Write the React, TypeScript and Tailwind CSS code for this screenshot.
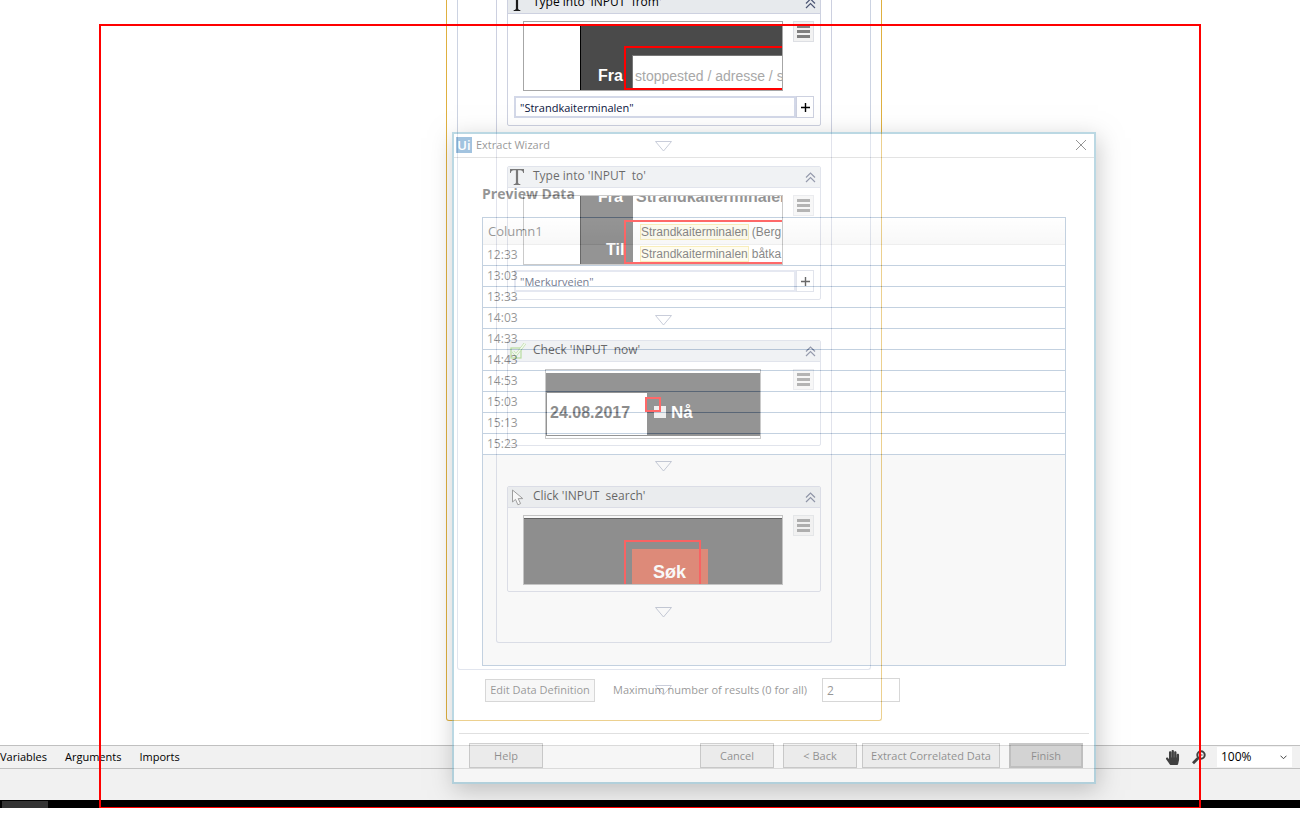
import type { ReactNode } from "react";
import { FaHandPaper } from "react-icons/fa";

const times = ["12:33", "13:03", "13:33", "14:03", "14:33", "14:43", "14:53", "15:03", "15:13", "15:23"];

function Connector() {
  return (
    <div className="flex h-10 items-center justify-center pr-px">
      <svg width="17" height="11" viewBox="0 0 17 11" fill="white" stroke="#a3abc0">
        <path d="M.5 .5H16.5L8.5 10Z" />
      </svg>
    </div>
  );
}

function TypeIcon() {
  return (
    <svg width="14" height="16" viewBox="0 0 14 16" fill="#1a1a1a">
      <path d="M0 0H14V4H13.2C12.9 2 12 1.2 10.3 1.2H8.1V13.2C8.1 14.5 8.6 14.9 10.3 15V16H3.7V15C5.4 14.9 5.9 14.5 5.9 13.2V1.2H3.7C2 1.2 1.1 2 .8 4H0Z" />
    </svg>
  );
}

function CheckIcon() {
  return (
    <svg width="16" height="16" viewBox="0 0 16 16" fill="none" stroke="#86c45c">
      <rect x="1" y="5" width="10" height="10" strokeWidth="1.2" />
      <path d="M3 8.5L6 12L15 .5" strokeWidth="2.6" />
      <path d="M3 8.5L6 12L15 .5" stroke="#eff8e8" strokeWidth="1.4" />
    </svg>
  );
}

function CursorIcon() {
  return (
    <svg width="14" height="17" viewBox="0 0 14 17" fill="white" stroke="#666">
      <path d="M2.5 1V13L5.5 10.4L7.9 15.8L10.6 14.6L8.2 9.6H12.8Z" />
    </svg>
  );
}

function Activity({ title, icon, thumb, value }: { title: string; icon: ReactNode; thumb: ReactNode; value?: string }) {
  return (
    <section className="rounded-[2px] border border-[#cdd1e0] bg-white">
      <header className="flex h-[21px] items-center border-b border-[#cdd1e0] bg-[#e7eaed]">
        <span className="flex w-[25px] justify-start pl-[2px]">{icon}</span>
        <h3 className="flex-1 pb-[2px] text-[12px] leading-4 whitespace-pre">{title}</h3>
        <button aria-label="Collapse" className="mr-1">
          <svg width="11" height="11" viewBox="0 0 11 11" fill="none" stroke="#4c5674" strokeWidth="1.2">
            <path d="M1 5.5L5.5 1L10 5.5M1 10L5.5 5.5L10 10" />
          </svg>
        </button>
      </header>
      <div className="flex items-start pt-[7px] pr-[6px] pl-[15px]">
        <div className="flex w-[260px] justify-center">{thumb}</div>
        <button aria-label="Options" className="ml-auto flex h-[21px] w-[21px] flex-col items-center justify-center gap-[2px] border border-[#dddfe4] bg-[#f2f2f2]">
          <span className="h-[3px] w-[13px] bg-[#808080]" />
          <span className="h-[3px] w-[13px] bg-[#808080]" />
          <span className="h-[3px] w-[13px] bg-[#808080]" />
        </button>
      </div>
      {value ? (
        <div className="flex h-[34px] px-[6px] pt-[5px] pb-[7px]">
          <input aria-label={title} defaultValue={value} className="min-w-0 flex-1 border-2 border-[#d3d8e8] px-1 pt-px text-[11px] leading-4 text-[#0b1540]" />
          <button aria-label="Expand editor" className="flex w-[18px] items-center justify-center border border-[#cdd1e0]">
            <svg width="9" height="9" viewBox="0 0 9 9" stroke="black" strokeWidth="1.4">
              <path d="M4.5 0V9M0 4.5H9" />
            </svg>
          </button>
        </div>
      ) : (
        <div className="h-[6px]" />
      )}
    </section>
  );
}

const arial = "font-['Liberation_Sans',Arial,sans-serif]";

function FromThumb() {
  return (
    <div className={`relative h-[70px] w-full overflow-hidden border border-[#a6a6a6] bg-white ${arial}`}>
      <div className="absolute top-[3px] right-0 bottom-0 left-[56px] border-l border-black bg-[#4a4a4a]" />
      <div className="absolute top-[33px] right-0 bottom-0 left-[108px] border-t border-l border-[#777] bg-white" />
      <b className="absolute top-[45px] left-[74px] text-[16px] leading-[18px] text-white">Fra</b>
      <span className="absolute top-[46px] left-[111px] whitespace-nowrap text-[14px] leading-4 text-[#a8a8a8]">stoppested / adresse / s</span>
      <div className="absolute top-[24px] right-0 bottom-0 left-[100px] border-2 border-r-0 border-[#ff0000]" />
    </div>
  );
}

function Suggestion({ rest }: { rest: string }) {
  return (
    <div className="flex h-[22px] items-center gap-[3px] whitespace-nowrap text-[12px] text-[#333]">
      <span className="flex h-4 items-center border border-[#f5e38c] bg-[#fefae6]">Strandkaiterminalen</span>
      {rest}
    </div>
  );
}

function ToThumb() {
  return (
    <div className={`relative h-[70px] w-full overflow-hidden border border-[#a6a6a6] bg-white ${arial}`}>
      <div className="absolute top-0 bottom-0 left-[56px] w-[53px] border-l border-black bg-[#4a4a4a]" />
      <b className="absolute top-[-8px] left-[74px] text-[16px] leading-[18px] text-white">Fra</b>
      <b className="absolute top-[-8px] left-[112px] text-[16px] leading-[18px] text-[#4a4a4a]">Strandkaiterminalen</b>
      <b className="absolute top-[45px] left-[82px] text-[16px] leading-[18px] text-white">Til</b>
      <div className="absolute top-[25px] right-0 left-[116px]">
        <Suggestion rest="(Berg" />
        <Suggestion rest="båtka" />
      </div>
      <div className="absolute top-[24px] right-0 bottom-0 left-[100px] border-2 border-r-0 border-[#ff0000]" />
    </div>
  );
}

function NowThumb() {
  return (
    <div className={`relative h-[70px] w-[216px] overflow-hidden border border-[#a6a6a6] bg-white ${arial}`}>
      <div className="absolute inset-x-0 top-[3px] bottom-[2px] bg-[#4a4a4a]" />
      <div className="absolute top-[23px] left-[1px] h-[42px] w-[100px] bg-white" />
      <b className="absolute top-[34px] left-[4px] text-[16px] leading-[18px] text-[#3c3c3c]">24.08.2017</b>
      <div className="absolute top-[36px] left-[108px] h-[12px] w-[12px] bg-[#e4e4e4]" />
      <b className="absolute top-[34px] left-[125px] text-[17px] leading-[18px] text-white">Nå</b>
      <div className="absolute top-[27px] left-[99px] h-[15px] w-[16px] border-2 border-[#ff0000]" />
    </div>
  );
}

function SearchThumb() {
  return (
    <div className={`relative h-[70px] w-full overflow-hidden border border-[#a6a6a6] bg-white ${arial}`}>
      <div className="absolute inset-x-0 top-[2px] bottom-0 border-t border-black bg-[#4a4a4a]" />
      <div className="absolute top-[33px] left-[108px] h-[40px] w-[76px] bg-[#d04325]" />
      <b className="absolute top-[46px] left-[129px] text-[18px] leading-5 text-white">Søk</b>
      <div className="absolute top-[24px] left-[100px] h-[60px] w-[77px] border-2 border-[#ff0000]" />
    </div>
  );
}

function Designer() {
  return (
    <main className="flex h-[745px] justify-center overflow-hidden bg-white pl-7">
      <div className="w-[436px] self-start rounded-b-[3px] border border-t-0 border-[#dfb040] px-[10px] pb-[10px]">
        <div className="rounded-b-[3px] border border-t-0 border-[#ccd3e2] px-[38px] pb-[26px]">
          <div className="flex flex-col rounded-b-[3px] border border-t-0 border-[#ccd0e0] px-[10px] pb-[10px]">
            <div className="-mt-2 flex flex-col">
              <Activity title="Type into 'INPUT  from'" icon={<TypeIcon />} thumb={<FromThumb />} value={'"Strandkaiterminalen"'} />
              <Connector />
              <Activity title="Type into 'INPUT  to'" icon={<TypeIcon />} thumb={<ToThumb />} value={'"Merkurveien"'} />
              <Connector />
              <Activity title="Check 'INPUT  now'" icon={<CheckIcon />} thumb={<NowThumb />} />
              <Connector />
              <Activity title="Click 'INPUT  search'" icon={<CursorIcon />} thumb={<SearchThumb />} />
              <Connector />
            </div>
          </div>
        </div>
        <Connector />
      </div>
    </main>
  );
}

const dialogButton = "h-[25px] border border-[#8f8f8f] bg-[#e4e4e4] pt-px text-[11px]";

function ExtractWizard() {
  return (
    <div role="dialog" aria-label="Extract Wizard" className="absolute top-[132px] left-[452px] flex w-[644px] flex-col border-2 border-[#5ba3bd] bg-white text-black opacity-[.41] shadow-[2px_6px_22px_rgba(0,0,0,0.5)]">
      <header className="flex h-6 items-center border-b border-[#bdbdbd] pr-[7px] pb-px pl-[2px]">
        <span className="flex h-4 w-4 items-center justify-center bg-[#1f70b4] text-[13px] leading-4 font-semibold text-white">Ui</span>
        <h1 className="ml-1 flex-1 text-[11px] leading-4">Extract Wizard</h1>
        <button aria-label="Close">
          <svg width="12" height="12" viewBox="0 0 12 12" stroke="black">
            <path d="M1 1L11 11M11 1L1 11" />
          </svg>
        </button>
      </header>
      <div className="px-7 pt-[26px]">
        <h2 className="h-[33px] text-[14px] leading-5 font-bold">Preview Data</h2>
        <div className="h-[449px] border border-[#6f90b6] bg-[#f0f0f0]">
          <table className="w-full border-collapse">
            <thead>
              <tr className="h-[26px] bg-linear-to-b from-white to-[#eeeeee]">
                <th className="border-b border-[#d8d8d8] py-0 pl-[5px] text-left text-[13px] leading-5 font-normal">Column1</th>
              </tr>
            </thead>
            <tbody>
              {times.map((time) => (
                <tr key={time} className="h-[21px] bg-white">
                  <td className="border-b border-[#6f90b6] py-0 pl-1 text-[12px] leading-5">{time}</td>
                </tr>
              ))}
            </tbody>
          </table>
        </div>
        <div className="mt-3 flex h-6 items-center pl-[3px] text-[11px]">
          <button className="h-[23px] w-[110px] border border-[#a0a0a0] bg-[#eeeeee]">Edit Data Definition</button>
          <label htmlFor="max-results" className="ml-[18px] w-[209px]">Maximum number of results (0 for all)</label>
          <input id="max-results" defaultValue="2" className="h-6 w-[78px] border border-[#a0a0a0] px-1 text-[12px]" />
        </div>
      </div>
      <footer className="mx-[5px] mt-[31px] flex h-[49px] items-start border-t border-[#b5b5b5] pt-[9px] pr-[6px] pl-[10px]">
        <button className={`${dialogButton} w-[74px]`}>Help</button>
        <button className={`${dialogButton} ml-auto w-[74px]`}>Cancel</button>
        <button className={`${dialogButton} ml-[9px] w-[74px]`}>&lt; Back</button>
        <button className={`${dialogButton} ml-[5px] w-[138px]`}>Extract Correlated Data</button>
        <button className="ml-[9px] h-[25px] w-[74px] border-2 border-[#7a7a7a] bg-[#a9a9a9] pt-px text-[11px]">Finish</button>
      </footer>
    </div>
  );
}

function StatusBar() {
  return (
    <nav className="flex h-6 items-center border-y border-[#c0c0c0] bg-[#f1f1f1] pr-2 text-[11px]">
      <div className="flex gap-[18px] pt-px">
        <button>Variables</button>
        <button>Arguments</button>
        <button>Imports</button>
      </div>
      <button aria-label="Pan" className="ml-auto text-[15px] text-[#404040]">
        <FaHandPaper />
      </button>
      <button aria-label="Reset zoom" className="mr-[11px] ml-3">
        <svg width="14" height="15" viewBox="0 0 14 15" fill="none" stroke="#404040">
          <circle cx="9" cy="5" r="3.7" strokeWidth="2" />
          <path d="M6.2 8L1 13.3" strokeWidth="2.8" />
          <path d="M7.5 5H10.5" />
        </svg>
      </button>
      <div className="relative flex h-5 w-[75px] items-center bg-white">
        <select aria-label="Zoom" className="h-5 w-full appearance-none pl-1 text-[12px]">
          <option>100%</option>
        </select>
        <svg className="pointer-events-none absolute right-[5px]" width="7" height="5" viewBox="0 0 7 5" fill="none" stroke="#444">
          <path d="M.5 .7L3.5 3.7L6.5 .7" />
        </svg>
      </div>
    </nav>
  );
}

export default function App() {
  return (
    <div className="relative overflow-hidden bg-white font-['Open_Sans','Noto_Sans',sans-serif] text-black">
      <Designer />
      <StatusBar />
      <div className="h-[31px] bg-[#f1f1f1]" />
      <div className="flex h-2 items-end bg-black pl-[2px]">
        <span className="h-[7px] w-[46px] bg-[#333]" />
      </div>
      <ExtractWizard />
      <div className="pointer-events-none absolute inset-x-[99px] top-[24px] -bottom-px border-2 border-[#ff0000]" />
    </div>
  );
}
